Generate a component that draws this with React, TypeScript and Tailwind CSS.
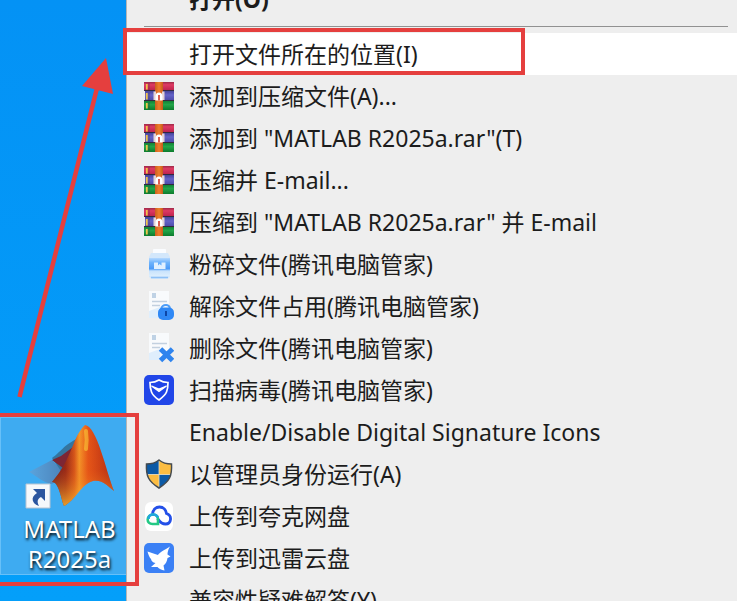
import { type ReactNode } from "react";

function ArchiveIcon() {
  return (
    <svg viewBox="0 0 30 28" className="h-7 w-[30px]" aria-hidden="true">
      <defs>
        <linearGradient id="bookRed" x2="0" y2="1">
          <stop offset="0" stopColor="#9d2a48" />
          <stop offset=".3" stopColor="#de3a63" />
          <stop offset="1" stopColor="#b8204b" />
        </linearGradient>
        <linearGradient id="bookBlue" x2="0" y2="1">
          <stop offset="0" stopColor="#45449a" />
          <stop offset=".4" stopColor="#6463c8" />
          <stop offset="1" stopColor="#4a48a6" />
        </linearGradient>
        <linearGradient id="bookGreen" x2="0" y2="1">
          <stop offset="0" stopColor="#128236" />
          <stop offset=".4" stopColor="#22a548" />
          <stop offset="1" stopColor="#0c7b2d" />
        </linearGradient>
        <linearGradient id="strap">
          <stop offset="0" stopColor="#c9601f" />
          <stop offset=".5" stopColor="#f07e2c" />
          <stop offset="1" stopColor="#c65a1b" />
        </linearGradient>
      </defs>
      <rect width="30" height="9" fill="url(#bookRed)" />
      <rect x="1" y="9" width="29" height="10" fill="url(#bookBlue)" />
      <rect y="19" width="30" height="9" fill="url(#bookGreen)" />
      <path d="M0 8.500h30M0 18.500h30" stroke="#33283f" strokeWidth="1" />
      <path d="M2.800 2v5.500M2.800 11v6.500M2.800 21v5.500" stroke="#f0c34b" strokeWidth="1.800" />
      <path d="M5 1v7M5 10.500v7.500M5 20v7" stroke="#3b2240" strokeOpacity=".4" />
      <rect x="11" width="8" height="28" fill="url(#strap)" />
      <path d="M9.500 9.500h2.500v8.500H9.500zM18 9.500h2.500v8.500H18z" fill="#e3d3d6" />
      <path d="M11.500 18.500v-4q0-4 3.500-4t3.500 4v4z" fill="#fff" />
      <path d="M15 13V18.500" stroke="#d94b3e" strokeWidth="1.800" />
    </svg>
  );
}

function ShredIcon() {
  return (
    <svg viewBox="0 0 30 30" className="size-[30px]" aria-hidden="true">
      <defs>
        <linearGradient id="jar" x2="0" y2="1">
          <stop offset="0" stopColor="#b4d8ff" />
          <stop offset=".25" stopColor="#6fb4fc" />
          <stop offset=".6" stopColor="#4a9af8" />
          <stop offset=".72" stopColor="#c9e3fc" />
          <stop offset="1" stopColor="#dceefd" />
        </linearGradient>
      </defs>
      <rect x="9" y="0" width="13" height="5" rx="1" fill="#fafcff" />
      <path d="M7 4h17l2 4v18q0 4-4 4H9q-4 0-4-4V8z" fill="#d3e7fb" />
      <rect x="5" y="9" width="21" height="18" fill="url(#jar)" />
      <path d="M10 13.500h4v3l1.500-1.500 2 1.500v-3h4V20H10z" fill="#e0f0ff" />
      <path d="M7 28.500h17" stroke="#8fc1f6" strokeWidth="1.500" />
    </svg>
  );
}

function DocumentBase() {
  return (
    <>
      <path d="M5 0h20v26H5z" fill="#f8fafc" />
      <path d="M8 2h4v5H8z" fill="#bfd2e5" />
      <path d="M8 10.500h15M8 14.500h8" stroke="#c2d0df" strokeWidth="1.500" />
      <path d="M5 20l11-4v11H5z" fill="#dfeefc" />
    </>
  );
}

function UnlockFileIcon() {
  return (
    <svg viewBox="0 0 30 30" className="size-[30px]" aria-hidden="true">
      <DocumentBase />
      <path d="M17 18q1-4 5-4 3 0 4 3" fill="none" stroke="#4d9df8" strokeWidth="2" />
      <rect x="14" y="16.500" width="16" height="12.500" rx="5" fill="#2f88f5" />
      <path d="M22 20v5" stroke="#0b3f9d" strokeWidth="1.800" />
    </svg>
  );
}

function DeleteFileIcon() {
  return (
    <svg viewBox="0 0 30 30" className="size-[30px]" aria-hidden="true">
      <DocumentBase />
      <path d="M16.500 16l12 11.500M28.500 16l-12 11.500" stroke="#2f84ee" strokeWidth="5" />
    </svg>
  );
}

function VirusScanIcon() {
  return (
    <svg viewBox="0 0 30 30" className="size-[30px]" fill="none" aria-hidden="true">
      <rect width="30" height="30" rx="5" fill="#2146e8" />
      <path
        d="M15 5q4 2.500 9 2.500 0 6-1.500 9.500T15 25q-6-4-7.500-8T6 7.500q5 0 9-2.500z"
        stroke="#fff"
        strokeWidth="1.700"
      />
      <path d="M7.500 11l7.500 5.500L22.500 11 15 14z" fill="#fff" stroke="#fff" strokeWidth="1.200" />
    </svg>
  );
}

function AdminShieldIcon() {
  return (
    <svg viewBox="0 0 30 30" className="size-[30px]" aria-hidden="true">
      <defs>
        <clipPath id="shieldClip">
          <path d="M15 1q5 4 12.500 4 .5 9-2 14T15 29Q7 24 4.500 19T2.500 5Q10 5 15 1z" />
        </clipPath>
      </defs>
      <g clipPath="url(#shieldClip)">
        <path d="M0 0h15v15.500H0zM15 15.500h15V30H15z" fill="#0c5aa6" />
        <path d="M15 0h15v15.500H15zM0 15.500h15V30H0z" fill="#fcbd42" />
        <path d="M15 0v30M0 15.500h30" stroke="#e8dcbc" strokeWidth=".8" />
      </g>
      <path
        d="M15 1q5 4 12.500 4 .5 9-2 14T15 29Q7 24 4.500 19T2.500 5Q10 5 15 1z"
        fill="none"
        stroke="#454b50"
        strokeWidth="1.500"
      />
    </svg>
  );
}

function QuarkCloudIcon() {
  return (
    <svg viewBox="0 0 30 30" className="size-[30px]" fill="none" aria-hidden="true">
      <rect x="1" y="1" width="28" height="29" rx="6" fill="#fff" />
      <path
        d="M8.500 13C9 8.500 12 6 15.500 6c4 0 6.500 3 7 6.500 6 2 5 10.500-1 10.500-5 0-6-3-8-5.500"
        stroke="#2450e8"
        strokeWidth="2.800"
      />
      <path d="M9 13.500c-7 .5-7 9.500-.5 9.500H14v-4.500c0-3-2-5-5-5z" stroke="#24c985" strokeWidth="2.600" />
      <path d="M4.500 18c0-3 2-4.500 5-4.500 2 0 3.500 1 4.500 3" stroke="#22a6df" strokeWidth="2.600" />
    </svg>
  );
}

function ThunderCloudIcon() {
  return (
    <svg viewBox="0 0 30 30" className="size-[30px]" aria-hidden="true">
      <rect width="30" height="30" rx="5" fill="#3b80f5" />
      <path
        d="M3.500 8.500L14 12c1.500-2.500 5.500-4.500 12-8.500-2 3-2.500 6-2.500 8l3 2-3 1.500c-.5 3-1.500 5.500-4 7.500l1 5c-3-.5-5.500-1.500-7-3.500L7 24l4.500-4c-3-.5-4-2-4.500-4C5.500 14.500 4.500 12 3.500 8.500z"
        fill="#fff"
      />
    </svg>
  );
}

function MatlabIcon() {
  return (
    <svg viewBox="0 0 90 88" className="h-[88px] w-[90px]" aria-hidden="true">
      <defs>
        <linearGradient id="peak" x1="0" y1="0" x2="1" y2="0">
          <stop offset="0" stopColor="#5b1420" />
          <stop offset=".22" stopColor="#8f2418" />
          <stop offset=".36" stopColor="#d4551b" />
          <stop offset=".44" stopColor="#f59a2a" />
          <stop offset=".58" stopColor="#e65518" />
          <stop offset="1" stopColor="#ab2412" />
        </linearGradient>
        <linearGradient id="glow" x2="0" y2="1">
          <stop offset="0" stopColor="#e35715" stopOpacity="0" />
          <stop offset=".55" stopColor="#e35715" stopOpacity=".2" />
          <stop offset="1" stopColor="#ffc530" />
        </linearGradient>
        <linearGradient id="wing">
          <stop offset="0" stopColor="#5ba4dc" />
          <stop offset="1" stopColor="#4a80b8" />
        </linearGradient>
      </defs>
      <path d="M4 50l23-12 14 14-14 10C18 61 12 54 4 50z" fill="url(#wing)" />
      <path d="M27 36c9-6 11-13 27-20L36 49z" fill="#34759f" />
      <path d="M27 38l9-4 8-6 8-6-14 24z" fill="#7d2634" />
      <path d="M60 3c-13 12-12 33-33 57 7 0 9 17 12 24 11-5 17-22 29-25 9-2 16 6 21 10C81 49 72 4 60 3z" fill="url(#peak)" />
      <path d="M60 3c-13 12-12 33-33 57 7 0 9 17 12 24 11-5 17-22 29-25 9-2 16 6 21 10C81 49 72 4 60 3z" fill="url(#glow)" opacity=".75" />
      <path d="M61 9c1 7 1 12 0 18" stroke="#ffe03d" strokeWidth="4" strokeOpacity=".5" strokeLinecap="round" fill="none" />
      <path d="M1 62h24v24H1z" fill="#f6f8fb" stroke="#b8c4d2" />
      <path d="M8 67h12v12l-4-4c-4 2-4 5-2 9-7-2-9-9-2-13z" fill="#2b559f" />
    </svg>
  );
}

type MenuEntry = { label: string; icon?: ReactNode; active?: boolean };

const entries: MenuEntry[] = [
  { label: "打开文件所在的位置(I)", active: true },
  { label: "添加到压缩文件(A)...", icon: <ArchiveIcon /> },
  { label: '添加到 "MATLAB R2025a.rar"(T)', icon: <ArchiveIcon /> },
  { label: "压缩并 E-mail...", icon: <ArchiveIcon /> },
  { label: '压缩到 "MATLAB R2025a.rar" 并 E-mail', icon: <ArchiveIcon /> },
  { label: "粉碎文件(腾讯电脑管家)", icon: <ShredIcon /> },
  { label: "解除文件占用(腾讯电脑管家)", icon: <UnlockFileIcon /> },
  { label: "删除文件(腾讯电脑管家)", icon: <DeleteFileIcon /> },
  { label: "扫描病毒(腾讯电脑管家)", icon: <VirusScanIcon /> },
  { label: "Enable/Disable Digital Signature Icons" },
  { label: "以管理员身份运行(A)", icon: <AdminShieldIcon /> },
  { label: "上传到夸克网盘", icon: <QuarkCloudIcon /> },
  { label: "上传到迅雷云盘", icon: <ThunderCloudIcon /> },
  { label: "兼容性疑难解答(Y)" },
];

function MenuRow({ label, icon, active }: MenuEntry) {
  return (
    <button
      type="button"
      role="menuitem"
      className={`flex h-[42px] w-full shrink-0 items-center pl-[17px] text-left whitespace-nowrap ${active ? "bg-white" : ""}`}
    >
      <span className="flex w-[45px] shrink-0 items-center">{icon}</span>
      <span>{label}</span>
    </button>
  );
}

export default function App() {
  return (
    <main className="relative flex h-screen overflow-hidden bg-[#0499f8] font-['Noto_Sans','Noto_Sans_CJK_SC',sans-serif] text-[23px] text-[#1c1c1c]">
      <section className="flex w-[126px] shrink-0 flex-col justify-end bg-linear-to-b from-[#0492f5] to-[#049ffa] pb-[26px]">
        <button
          type="button"
          className="flex h-[158px] w-full flex-col items-center border border-r-0 border-[#67c0f8] bg-[#3eabf1] pl-3 text-white"
        >
          <span className="flex h-24 w-full items-start pt-1 pl-3">
            <MatlabIcon />
          </span>
          <span className="text-center text-2xl leading-[30px] [text-shadow:1px_2px_3px_#000]">
            MATLAB
            <br />
            R2025a
          </span>
        </button>
      </section>

      <nav role="menu" className="flex min-w-0 flex-1 flex-col border-l border-[#b5b5b5] bg-[#eeeeee]">
        <button
          type="button"
          role="menuitem"
          className="-mt-[22px] flex h-[42px] w-full shrink-0 items-center pl-[62px] font-bold"
        >
          打开(O)
        </button>
        <div className="flex h-[13px] shrink-0 items-center pr-[9px] pl-[17px]">
          <hr className="w-full border-t border-[#919191]" />
        </div>
        {entries.map((entry) => (
          <MenuRow key={entry.label} {...entry} />
        ))}
      </nav>

      <div className="pointer-events-none absolute top-7 left-[123px] h-[47px] w-[402px] border-4 border-[#e53f3e]" />
      <div className="pointer-events-none absolute top-[413px] -left-1 h-[173px] w-[143px] border-4 border-[#e53f3e]" />
      <svg className="pointer-events-none absolute top-0 left-0 h-[420px] w-[126px]" viewBox="0 0 126 420" aria-hidden="true">
        <path d="M19.500 397L97 88" stroke="#e53f3e" strokeWidth="4.500" />
        <path d="M106 58L82 86l31 8z" fill="#e53f3e" />
      </svg>
    </main>
  );
}
